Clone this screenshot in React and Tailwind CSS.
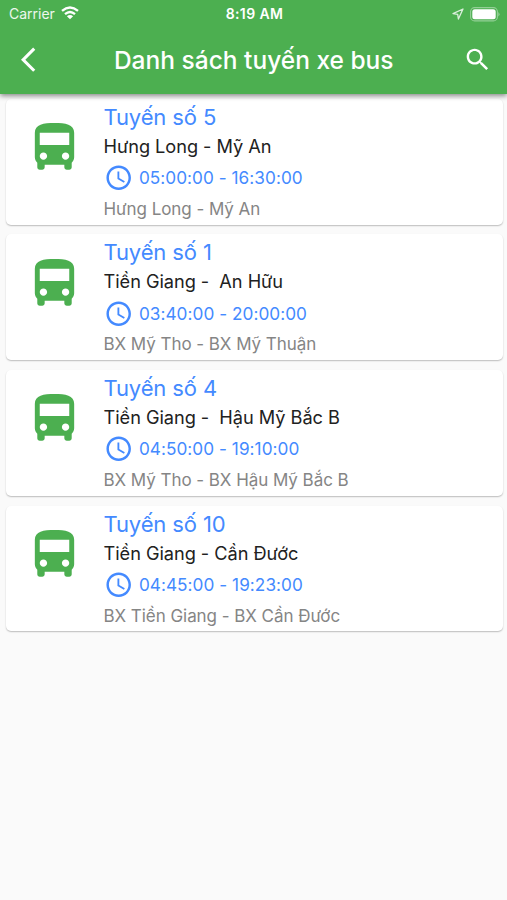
const routes = [
  { title: "Tuyến số 5", name: "Hưng Long - Mỹ An", time: "05:00:00 - 16:30:00", stops: "Hưng Long - Mỹ An" },
  { title: "Tuyến số 1", name: "Tiền Giang -  An Hữu", time: "03:40:00 - 20:00:00", stops: "BX Mỹ Tho - BX Mỹ Thuận" },
  { title: "Tuyến số 4", name: "Tiền Giang -  Hậu Mỹ Bắc B", time: "04:50:00 - 19:10:00", stops: "BX Mỹ Tho - BX Hậu Mỹ Bắc B" },
  { title: "Tuyến số 10", name: "Tiền Giang - Cần Đước", time: "04:45:00 - 19:23:00", stops: "BX Tiền Giang - BX Cần Đước" },
];

function Icon({ d, className }) {
  return (
    <svg viewBox="0 0 24 24" fill="currentColor" className={`shrink-0 ${className}`}>
      <path d={d} />
    </svg>
  );
}

const BACK = "M11.67 3.87L9.9 2.1 0 12l9.9 9.9 1.77-1.77L3.54 12z";
const SEARCH =
  "M15.5 14h-.79l-.28-.27C15.41 12.59 16 11.11 16 9.5 16 5.91 13.09 3 9.5 3S3 5.91 3 9.5 5.91 16 9.5 16c1.61 0 3.09-.59 4.23-1.57l.27.28v.79l5 4.99L20.49 19l-4.99-5zm-6 0C7.01 14 5 11.99 5 9.5S7.01 5 9.5 5 14 7.01 14 9.5 11.99 14 9.5 14z";
const BUS =
  "M4 16c0 .88.39 1.67 1 2.22V20c0 .55.45 1 1 1h1c.55 0 1-.45 1-1v-1h8v1c0 .55.45 1 1 1h1c.55 0 1-.45 1-1v-1.78c.61-.55 1-1.34 1-2.22V6c0-3.5-3.58-4-8-4s-8 .5-8 4v10zm3.5 1c-.83 0-1.5-.67-1.5-1.5S6.67 14 7.5 14s1.5.67 1.5 1.5S8.33 17 7.5 17zm9 0c-.83 0-1.5-.67-1.5-1.5s.67-1.5 1.5-1.5 1.5.67 1.5 1.5-.67 1.5-1.5 1.5zm1.5-6H6V6h12v5z";
const CLOCK =
  "M11.99 2C6.47 2 2 6.48 2 12s4.47 10 9.99 10C17.52 22 22 17.52 22 12S17.52 2 11.99 2zM12 20c-4.42 0-8-3.58-8-8s3.58-8 8-8 8 3.58 8 8-3.58 8-8 8zm.5-13H11v6l5.25 3.15.75-1.23-4.5-2.67z";

function StatusBar() {
  return (
    <div className="grid h-[26px] grid-cols-3 items-center pl-[9px] pr-[7px] pt-[2px] text-[14px] leading-none">
      <div className="flex items-center gap-[6px]">
        <span className="text-white/90">Carrier</span>
        <svg viewBox="0 0 18 14" className="h-[14px] w-[18px] -translate-y-px" fill="none" stroke="currentColor">
          <path d="M1 4.8Q9-2 17 4.8" strokeWidth="2.4" />
          <path d="M4 8.2Q9 3.8 14 8.2" strokeWidth="2.3" />
          <path d="M9 13.2L5.9 10.2Q9 7.6 12.1 10.2Z" fill="currentColor" stroke="none" />
        </svg>
      </div>
      <span className="text-center text-[14px] font-semibold tracking-[0.4px]">8:19 AM</span>
      <div className="flex items-center justify-end gap-[6px]">
        <svg viewBox="0 0 12 12" className="h-[12px] w-[12px] text-white/80" fill="none" stroke="currentColor" strokeWidth="1.3" strokeLinejoin="round">
          <path d="M11 1L1 5.6L5.7 6.3L6.4 11Z" />
        </svg>
        <svg viewBox="0 0 30 15" className="h-[15px] w-[30px]">
          <rect x=".6" y=".6" width="26.8" height="13.3" rx="4" fill="none" stroke="white" strokeOpacity=".4" strokeWidth="1.1" />
          <rect x="2.3" y="2.3" width="23.4" height="9.9" rx="2.5" fill="white" />
          <path d="M28.4 5Q30.6 7.3 28.4 9.6Z" fill="white" fillOpacity=".45" />
        </svg>
      </div>
    </div>
  );
}

function RouteCard({ route }) {
  return (
    <article className="flex h-[125.7px] rounded-[5px] bg-white pl-[19.5px] shadow-[0_1px_1.5px_rgba(0,0,0,0.25)]">
      <Icon d={BUS} className="mt-[19.3px] h-[59px] w-[59px] text-[#4caf50]" />
      <div className="ml-[19.5px] flex flex-col whitespace-pre">
        <h2 className="mt-[4px] h-[28px] text-[22px] leading-[28px] tracking-[-0.12px] text-[#448aff]">{route.title}</h2>
        <p className="mt-[3px] h-[24px] text-[18.2px] leading-[24px] tracking-[-0.04px] text-[#212121]">{route.name}</p>
        <div className="mt-[5px] flex h-[30px] items-center gap-[6px] text-[#448aff]">
          <Icon d={CLOCK} className="h-[29.4px] w-[29.4px]" />
          <span className="text-[17.2px] tracking-[0.05px]">{route.time}</span>
        </div>
        <p className="mt-[4px] h-[24px] text-[17px] leading-[24px] tracking-[-0.05px] text-[#858585]">{route.stops}</p>
      </div>
    </article>
  );
}

export default function App() {
  return (
    <div className="flex h-[900px] w-[507px] flex-col overflow-hidden bg-[#fafafa] font-['Inter','Noto_Sans',sans-serif]">
      <header className="relative z-10 h-[94px] bg-[#4caf50] text-white shadow-[0_2px_5px_rgba(0,0,0,0.45)]">
        <StatusBar />
        <div className="flex h-[68px] items-center pl-[20.5px] pr-[15px]">
          <Icon d={BACK} className="h-[29.4px] w-[29.4px]" />
          <h1 className="flex-1 pr-[5px] text-center text-[24.5px] font-medium">Danh sách tuyến xe bus</h1>
          <Icon d={SEARCH} className="h-[29.4px] w-[29.4px]" />
        </div>
      </header>
      <main className="flex flex-col gap-[9.9px] pl-[5.5px] pr-[4.5px] pt-[4.9px]">
        {routes.map((route) => (
          <RouteCard key={route.title} route={route} />
        ))}
      </main>
    </div>
  );
}
